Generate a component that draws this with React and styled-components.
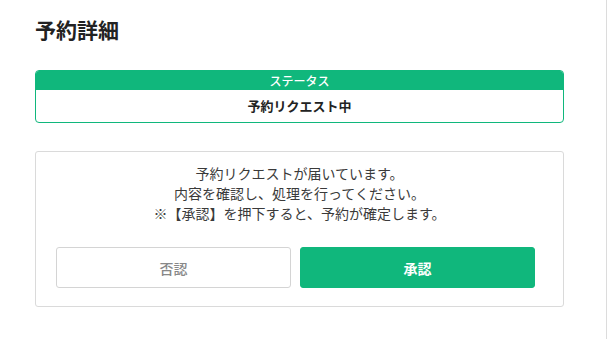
import React from 'react';
import styled, { createGlobalStyle } from 'styled-components';

const GlobalStyle = createGlobalStyle`
  html, body {
    margin: 0;
    padding: 0;
    background: #fff;
  }
  body {
    font-family: "Noto Sans CJK JP", "Noto Sans", sans-serif;
    color: #333;
  }
`;

const green = '#10b77c';

const Page = styled.div`
  display: flex;
  min-height: 339px;
`;

const Main = styled.main`
  width: 571px;
  padding: 0 0 0 35px;
  border-right: 1px solid #dcdcdc;
  box-sizing: content-box;
  margin-right: 1px;
`;

const Content = styled.div`
  width: 529px;
`;

const Title = styled.h1`
  margin: 0;
  padding-top: 14px;
  font-size: 21px;
  line-height: 30px;
  font-weight: 700;
  color: #222;
`;

const StatusBox = styled.section`
  margin-top: 26px;
  border: 1px solid ${green};
  border-radius: 4px;
  overflow: hidden;
`;

const StatusHead = styled.div`
  background: ${green};
  color: #fff;
  font-size: 12px;
  font-weight: 500;
  line-height: 19px;
  text-align: center;
`;

const StatusValue = styled.div`
  font-size: 13px;
  font-weight: 700;
  line-height: 32px;
  text-align: center;
  color: #222;
`;

const Card = styled.section`
  margin-top: 28px;
  border: 1px solid #dadada;
  border-radius: 3px;
  padding: 11px 20px 18px 20px;
`;

const Message = styled.p`
  margin: 0;
  font-size: 14px;
  line-height: 20px;
  text-align: center;
  color: #3a3a3a;
`;

const Actions = styled.div`
  display: flex;
  gap: 9px;
  margin-top: 24px;
  padding-right: 8px;
`;

const Button = styled.button`
  flex: 1 1 0;
  min-width: 0;
  box-sizing: border-box;
  height: 41px;
  border-radius: 3px;
  font-family: inherit;
  font-size: 14px;
  cursor: pointer;
  border: 1px solid ${(p) => (p.$primary ? green : '#d4d4d4')};
  background: ${(p) => (p.$primary ? green : '#fff')};
  color: ${(p) => (p.$primary ? '#fff' : '#888')};
  font-weight: ${(p) => (p.$primary ? 700 : 500)};
`;

export default function App() {
  return (
    <Page>
      <GlobalStyle />
      <Main>
        <Content>
          <Title>予約詳細</Title>
          <StatusBox>
            <StatusHead>ステータス</StatusHead>
            <StatusValue>予約リクエスト中</StatusValue>
          </StatusBox>
          <Card>
            <Message>
              予約リクエストが届いています。
              <br />
              内容を確認し、処理を行ってください。
              <br />
              ※【承認】を押下すると、予約が確定します。
            </Message>
            <Actions>
              <Button>否認</Button>
              <Button $primary>承認</Button>
            </Actions>
          </Card>
        </Content>
      </Main>
    </Page>
  );
}
